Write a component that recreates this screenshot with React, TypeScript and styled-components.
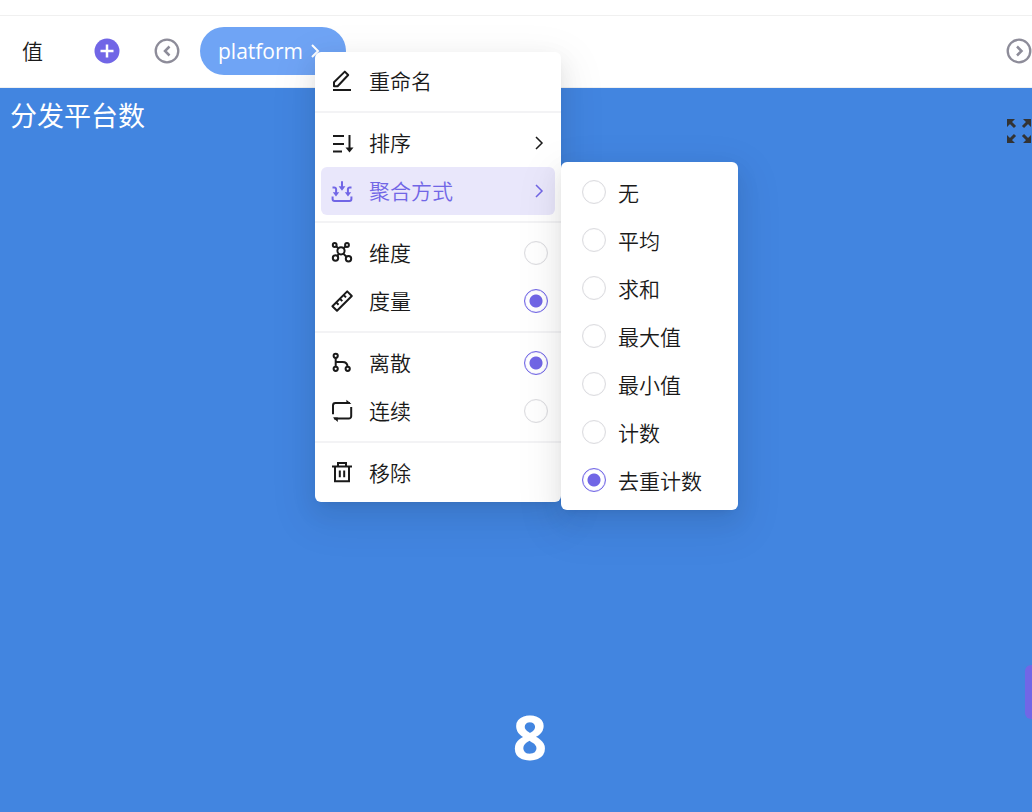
import React from "react";
import styled, { createGlobalStyle } from "styled-components";

const accent = "#7166e6";
const ink = "#1a1a1a";

const GlobalStyle = createGlobalStyle`
  *, *::before, *::after { box-sizing: border-box; }
  body {
    margin: 0;
    background: #fff;
    color: ${ink};
    font-family: "Open Sans", "Noto Sans CJK SC", sans-serif;
    font-size: 21px;
    font-weight: 350;
  }
  button, input { font: inherit; color: inherit; }
`;

const Page = styled.div`
  display: flex;
  flex-direction: column;
  min-height: 100vh;
  overflow: hidden;
`;

const ShelfAbove = styled.div`
  height: 16px;
  border-bottom: 1px solid #f0f0f0;
`;

const Shelf = styled.section`
  display: flex;
  align-items: center;
  height: 72px;
  padding: 0 1px 1px 22px;
  border-bottom: 1px solid #f0f0f0;
`;

const ShelfLabel = styled.span`
  width: 73px;
  line-height: 32px;
`;

const IconButton = styled.button<{ $tone: string; $gap?: number }>`
  display: flex;
  flex: none;
  margin: 0 ${(p) => p.$gap ?? 0}px 0 0;
  padding: 0;
  border: 0;
  background: none;
  color: ${(p) => p.$tone};
  cursor: pointer;
`;

const FieldSlot = styled.div`
  position: relative;
  flex: none;
  margin-right: auto;
`;

const FieldPill = styled.button`
  display: flex;
  align-items: center;
  gap: 6px;
  width: 146px;
  height: 48px;
  padding: 0 18px;
  border: 0;
  border-radius: 24px;
  background: #6fa4f5;
  color: #fff;
  font-weight: 400;
  cursor: pointer;
`;

const Popup = styled.div`
  position: absolute;
  z-index: 10;
  border-radius: 6px;
  background: #fff;
  box-shadow: 0 4px 9px -6px rgba(0, 0, 0, 0.12), 0 9px 24px rgba(0, 0, 0, 0.08),
    0 14px 42px 12px rgba(0, 0, 0, 0.05);
`;

const FieldMenu = styled(Popup)`
  top: 25px;
  left: 115px;
  width: 246px;
  padding: 5px 0;
`;

const SubMenu = styled(Popup)`
  top: -5px;
  left: 240px;
  width: 177px;
  padding: 6px 0;
  color: ${ink};
`;

const Separator = styled.hr`
  height: 2px;
  margin: 6px 0;
  border: 0;
  background: #f3f3f5;
`;

const ItemSlot = styled.div`
  position: relative;
  margin: 0 6px;
`;

const MenuItem = styled.button<{ $active?: boolean }>`
  display: flex;
  align-items: center;
  gap: 15px;
  width: 100%;
  height: 48px;
  padding: 0 7px 0 9px;
  border: 0;
  border-radius: 6px;
  background: ${(p) => (p.$active ? "#e9e7fb" : "transparent")};
  color: ${(p) => (p.$active ? accent : ink)};
  text-align: left;
  cursor: pointer;
`;

const ItemText = styled.span`
  flex: 1;
  line-height: 32px;
`;

const OptionText = styled(ItemText)`
  padding-top: 2px;
`;

const OptionRow = styled.label`
  display: flex;
  align-items: center;
  gap: 12px;
  height: 48px;
  padding: 0 21px;
  cursor: pointer;
`;

const Radio = styled.input`
  appearance: none;
  flex: none;
  width: 24px;
  height: 24px;
  margin: 0;
  border: 1px solid #dcdce0;
  border-radius: 50%;
  background: #fff;
  box-shadow: inset 0 0 1px #dcdce0;

  &:checked {
    border-color: ${accent};
    background: radial-gradient(circle, ${accent} 6px, #fff 7px);
    box-shadow: inset 0 0 1px ${accent};
  }
`;

const Canvas = styled.main`
  flex: 1;
  background: #4285e0;
  color: #fff;
`;

const CanvasHeader = styled.header`
  display: flex;
  align-items: flex-start;
  justify-content: space-between;
  padding: 8px 0 0 10px;
`;

const CanvasTitle = styled.h1`
  margin: 0;
  font-size: 27px;
  font-weight: 400;
  line-height: 40px;
`;

const ExpandSlot = styled.div`
  padding-top: 22px;
`;

const Metric = styled.p`
  margin: 0;
  padding: 553px 0 0 28px;
  font-size: 60px;
  font-weight: 700;
  line-height: 80px;
  text-align: center;
`;

const DrawerHandle = styled.button`
  position: absolute;
  top: 665px;
  right: 0;
  width: 7px;
  height: 54px;
  padding: 0;
  border: 0;
  border-radius: 6px 0 0 6px;
  background: ${accent};
`;

const Icon = styled.svg`
  flex: none;
  fill: none;
  stroke: currentColor;
  stroke-width: 2;
`;

function Glyph({ children }: { children: React.ReactNode }) {
  return (
    <Icon width="24" height="24" viewBox="0 0 24 24" aria-hidden="true">
      {children}
    </Icon>
  );
}

const icons = {
  rename: (
    <Glyph>
      <path d="M4 17.2v-4L14.8 2.6l3.4 3.4L7.6 17.2zM3 21h18" strokeLinejoin="round" />
    </Glyph>
  ),
  sort: (
    <Glyph>
      <path d="M3 5h11M3 13h11M3 20.5h9M19.5 4v14" />
      <path d="M15.5 16.5h8l-4 5z" fill="currentColor" stroke="none" />
    </Glyph>
  ),
  aggregate: (
    <Glyph>
      <path d="M2.6 17.5V20a2 2 0 0 0 2 2h14.8a2 2 0 0 0 2-2v-2.500M12 2.200v6M2.500 8.500h1.800a1.800 1.800 0 0 1 1.800 1.800V14M21.500 8.500h-1.800a1.800 1.800 0 0 0-1.800 1.800V14" />
      <path d="M8.600 7.200h6.800L12 11.800zM2.800 13.200h6.400L6 17.600zM14.800 13.200h6.400L18 17.600z" fill="currentColor" stroke="none" />
    </Glyph>
  ),
  dimension: (
    <Glyph>
      <circle cx="11" cy="9.8" r="3.6" />
      <circle cx="4.7" cy="4" r="1.9" />
      <circle cx="17" cy="4" r="1.9" />
      <circle cx="5.5" cy="17" r="2.7" />
      <circle cx="18.5" cy="17.8" r="2.7" />
      <path d="M6 5.3l2.4 2M15.6 5.3l-2 2M9 12.8l-2 2.2M13.4 12.6l3.2 3.4" />
    </Glyph>
  ),
  measure: (
    <Glyph>
      <path d="M2.4 17.2L17.2 2.4l4.6 4.6L7 21.8z" strokeLinejoin="round" />
      <path d="M6.2 13.4l2.4 2.4M9.9 9.7l2.4 2.4M13.6 6l2.4 2.4" />
    </Glyph>
  ),
  discrete: (
    <Glyph>
      <circle cx="5.7" cy="4.8" r="2.1" />
      <circle cx="5.7" cy="17.8" r="2.1" />
      <circle cx="17.7" cy="17.8" r="2.1" />
      <path d="M5.7 7v8.8M5.7 11h6.8c3.4 0 5 1.6 5 4.8" />
    </Glyph>
  ),
  continuous: (
    <Glyph>
      <path d="M3 15.2V6.4a2.4 2.4 0 0 1 2.4-2.4H20M21.2 8v9.2a2.4 2.4 0 0 1-2.4 2.4H4" />
      <path d="M16.4.8l5 4.2h-5zM7.8 23l-5-4.4h5z" fill="currentColor" stroke="none" />
    </Glyph>
  ),
  remove: (
    <Glyph>
      <path d="M2 5.400h20M8 5.400V2h8v3.400M5 5.400v14.800h14V5.400M9.800 9.600v6.600M14.200 9.600v6.600" />
    </Glyph>
  ),
};

function Chevron() {
  return (
    <Icon width="18" height="18" viewBox="0 0 18 18" aria-hidden="true">
      <path d="M6 3l6 6-6 6" strokeWidth="1.500" />
    </Icon>
  );
}

function CircleArrow({ d }: { d: string }) {
  return (
    <Icon width="24" height="24" viewBox="0 0 24 24" overflow="visible" aria-hidden="true">
      <circle cx="12" cy="12" r="11.300" strokeWidth="2.300" />
      <path d={d} strokeWidth="2.500" />
    </Icon>
  );
}

function RadioItem({ icon, text, name, checked }: { icon: React.ReactNode; text: string; name: string; checked?: boolean }) {
  return (
    <ItemSlot>
      <MenuItem as="label">
        {icon}
        <ItemText>{text}</ItemText>
        <Radio type="radio" name={name} defaultChecked={checked} />
      </MenuItem>
    </ItemSlot>
  );
}

const aggregations = ["无", "平均", "求和", "最大值", "最小值", "计数", "去重计数"];

export default function App() {
  return (
    <>
      <GlobalStyle />
      <Page>
        <ShelfAbove />
        <Shelf>
          <ShelfLabel>值</ShelfLabel>
          <IconButton $tone={accent} $gap={36} aria-label="添加">
            <Icon width="24" height="24" viewBox="0 0 24 24" overflow="visible" aria-hidden="true">
              <circle cx="12" cy="12" r="12.500" fill="currentColor" stroke="none" />
              <path d="M12 5.500v13M5.500 12h13" stroke="#fff" strokeWidth="2.500" />
            </Icon>
          </IconButton>
          <IconButton $tone="#8d8c99" $gap={21} aria-label="向左">
            <CircleArrow d="M14.5 7.5L10 12l4.5 4.5" />
          </IconButton>
          <FieldSlot>
            <FieldPill>
              platform
              <Icon width="14" height="18" viewBox="0 0 14 18" aria-hidden="true">
                <path d="M3 3l6 6-6 6" />
              </Icon>
            </FieldPill>
            <FieldMenu>
              <ItemSlot>
                <MenuItem>
                  {icons.rename}
                  <ItemText>重命名</ItemText>
                </MenuItem>
              </ItemSlot>
              <Separator />
              <ItemSlot>
                <MenuItem>
                  {icons.sort}
                  <ItemText>排序</ItemText>
                  <Chevron />
                </MenuItem>
              </ItemSlot>
              <ItemSlot>
                <MenuItem $active aria-expanded="true">
                  {icons.aggregate}
                  <ItemText>聚合方式</ItemText>
                  <Chevron />
                </MenuItem>
                <SubMenu>
                  {aggregations.map((name) => (
                    <OptionRow key={name}>
                      <Radio type="radio" name="aggregation" defaultChecked={name === "去重计数"} />
                      <OptionText>{name}</OptionText>
                    </OptionRow>
                  ))}
                </SubMenu>
              </ItemSlot>
              <Separator />
              <RadioItem icon={icons.dimension} text="维度" name="role" />
              <RadioItem icon={icons.measure} text="度量" name="role" checked />
              <Separator />
              <RadioItem icon={icons.discrete} text="离散" name="scale" checked />
              <RadioItem icon={icons.continuous} text="连续" name="scale" />
              <Separator />
              <ItemSlot>
                <MenuItem>
                  {icons.remove}
                  <ItemText>移除</ItemText>
                </MenuItem>
              </ItemSlot>
            </FieldMenu>
          </FieldSlot>
          <IconButton $tone="#8d8c99" aria-label="向右">
            <CircleArrow d="M10 7.5l4.5 4.5-4.5 4.5" />
          </IconButton>
        </Shelf>
        <Canvas>
          <CanvasHeader>
            <CanvasTitle>分发平台数</CanvasTitle>
            <ExpandSlot>
              <IconButton $tone="#333" aria-label="全屏">
                <Icon width="26" height="26" viewBox="0 0 26 26" aria-hidden="true">
                  <path d="M3 3l6 6M23 3l-6 6M3 23l6-6M23 23l-6-6" strokeWidth="3" />
                  <path
                    d="M1 1h8l-2.500 2.500-3 3L1 9zM25 1h-8l5.500 5.500L25 9zM1 25h8l-5.500-5.500L1 17zM25 25h-8l5.500-5.500L25 17z"
                    fill="currentColor"
                    stroke="none"
                  />
                </Icon>
              </IconButton>
            </ExpandSlot>
          </CanvasHeader>
          <Metric>8</Metric>
        </Canvas>
        <DrawerHandle aria-label="展开面板" />
      </Page>
    </>
  );
}
